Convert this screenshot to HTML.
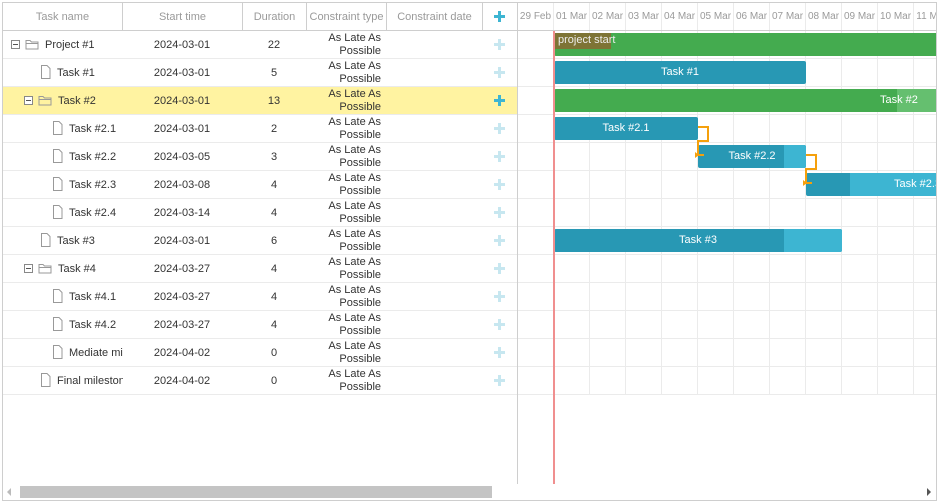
<!DOCTYPE html>
<html><head><style>
*{margin:0;padding:0;box-sizing:border-box}
body{width:938px;height:502px;background:#fff;font-family:"Liberation Sans",Arial,sans-serif;font-size:11px;color:#333;position:relative;overflow:hidden}
.a{position:absolute}
.hd{color:#9a9a9a;text-align:center;top:3px;height:28px;line-height:28px}
.row{position:absolute;left:3px;width:514px;height:28px;border-bottom:1px solid #ebebeb}
.c{position:absolute;top:1px;height:27px;line-height:27px;white-space:nowrap;overflow:hidden}
.ct{position:absolute;left:300px;width:78px;text-align:right;top:1px;line-height:12.5px}
.plus{position:absolute;left:491px;top:8px;width:11px;height:11px}
.plus:before{content:"";position:absolute;left:4px;top:0;width:3px;height:11px;background:#c7e7f0}
.plus:after{content:"";position:absolute;left:0;top:4px;width:11px;height:3px;background:#c7e7f0}
.plus.on:before,.plus.on:after{background:#3db5d2}
.tog{position:absolute;top:9px;width:9px;height:9px;border:1px solid #888;background:#fff}
.tog:after{content:"";position:absolute;left:1px;top:3px;width:5px;height:1px;background:#555}
.bar{position:absolute;height:23px;border-radius:2px;overflow:hidden}
.lb{position:absolute;color:#fff;height:23px;line-height:23px;white-space:nowrap}
.vl{position:absolute;width:1px;background:#ebebeb}
</style></head><body>
<div class="a" style="left:2px;top:2px;width:935px;height:499px;border:1px solid #cecece"></div>
<div class="a" style="left:3px;top:30px;width:933px;height:1px;background:#cecece"></div>
<div class="a hd" style="left:3px;width:119px">Task name</div>
<div class="a hd" style="left:122px;width:120px;border-left:1px solid #cecece">Start time</div>
<div class="a hd" style="left:242px;width:64px;border-left:1px solid #cecece">Duration</div>
<div class="a hd" style="left:306px;width:80px;border-left:1px solid #cecece">Constraint type</div>
<div class="a hd" style="left:386px;width:96px;border-left:1px solid #cecece">Constraint date</div>
<div class="a hd" style="left:482px;width:35px;border-left:1px solid #cecece"></div>
<div class="plus on" style="left:494px;top:11px"></div>
<div class="a" style="left:517px;top:3px;width:1px;height:481px;background:#cecece"></div>
<div class="a" id="scale" style="left:518px;top:3px;height:27px;width:418px;overflow:hidden;color:#9a9a9a;font-size:10px"></div>
<div class="a" id="rows" style="left:0;top:0"></div>
<div class="a" id="chart" style="left:518px;top:31px;width:418px;height:453px;overflow:hidden"></div>
<div class="a" style="left:20px;top:486px;width:472px;height:12px;background:#c4c4c4"></div>
<div class="a" style="left:7px;top:488px;width:0;height:0;border-top:4px solid transparent;border-bottom:4px solid transparent;border-right:4px solid #bbb"></div>
<div class="a" style="left:927px;top:488px;width:0;height:0;border-top:4px solid transparent;border-bottom:4px solid transparent;border-left:4px solid #555"></div>
<script>
var d=["29 Feb","01 Mar","02 Mar","03 Mar","04 Mar","05 Mar","06 Mar","07 Mar","08 Mar","09 Mar","10 Mar","11 Mar"],s="";
d.forEach(function(t,i){s+='<div class="a" style="left:'+(i*36)+'px;top:0;width:36px;height:27px;line-height:27px;text-align:center;border-right:1px solid #ebebeb;white-space:nowrap;overflow:hidden">'+t+'</div>'});
document.getElementById('scale').innerHTML=s;
var R=[["Project #1","2024-03-01","22",0,"f"],["Task #1","2024-03-01","5",1,"d"],["Task #2","2024-03-01","13",1,"f",1],["Task #2.1","2024-03-01","2",2,"d"],["Task #2.2","2024-03-05","3",2,"d"],["Task #2.3","2024-03-08","4",2,"d"],["Task #2.4","2024-03-14","4",2,"d"],["Task #3","2024-03-01","6",1,"d"],["Task #4","2024-03-27","4",1,"f"],["Task #4.1","2024-03-27","4",2,"d"],["Task #4.2","2024-03-27","4",2,"d"],["Mediate milestone","2024-04-02","0",2,"d"],["Final milestone","2024-04-02","0",1,"d"]];
var h="";
var fold='<svg width="15" height="12" viewBox="0 0 15 12"><path d="M1 2.5h4l1.5 1.5h6.5v7h-12z M1 5.5h12" fill="none" stroke="#999" stroke-width="1"/></svg>';
var doc='<svg width="11" height="14" viewBox="0 0 11 14"><path d="M1.5 0.5h5.5l3 3v10h-8.5z" fill="none" stroke="#999"/></svg>';
R.forEach(function(r,i){
 var top=31+28*i,l=r[3];var bg=r[5]?'background:#fff3a1;':'';
 h+='<div class="row" style="top:'+top+'px;'+bg+'">';
 var tx;
 if(r[4]=="f"){var tg=l==0?8:21;h+='<div class="tog" style="left:'+tg+'px"></div><div class="a" style="left:'+(tg+14)+'px;top:7px">'+fold+'</div>';tx=tg+34;}
 else{var ic=l==1?37:49;h+='<div class="a" style="left:'+ic+'px;top:6px">'+doc+'</div>';tx=ic+17;}
 h+='<div class="c" style="left:'+tx+'px;width:'+(120-tx)+'px">'+r[0]+'</div>';
 h+='<div class="c" style="left:119px;width:120px;text-align:center">'+r[1]+'</div>';
 h+='<div class="c" style="left:239px;width:64px;text-align:center">'+r[2]+'</div>';
 h+='<div class="ct">As Late As<br>Possible</div>';
 h+='<div class="plus'+(r[5]?' on':'')+'"></div></div>';
});
document.getElementById('rows').innerHTML=h;
var c="";
for(var i=0;i<13;i++)c+='<div class="a" style="left:0;top:'+(27+28*i)+'px;width:418px;height:1px;background:#ebebeb"></div>';
for(var i=1;i<12;i++)c+='<div class="vl" style="left:'+(i*36-1)+'px;top:0;height:364px"></div>';
function bar(x,w,row,col,txt,pw,pc,lx){var t=2+28*row;c+='<div class="bar" style="left:'+x+'px;top:'+t+'px;width:'+w+'px;background:'+col+'">'+(pw!=null?'<div class="a" style="left:'+pw+'px;top:0;width:'+(w-pw)+'px;height:23px;background:'+pc+'"></div>':'')+'</div>';
 if(txt){ if(lx==null) c+='<div class="lb" style="left:'+x+'px;top:'+t+'px;width:'+w+'px;text-align:center">'+txt+'</div>'; else c+='<div class="lb" style="left:'+lx+'px;top:'+t+'px">'+txt+'</div>';}}
bar(36,400,0,'#44ab4f','');
bar(36,252,1,'#2898b4','Task #1');
bar(36,400,2,'#44ab4f','Task #2',343,'#65bf6f',362);
bar(36,144,3,'#2898b4','Task #2.1');
bar(180,108,4,'#2898b4','Task #2.2',86,'#3db5d2');
bar(288,150,5,'#2898b4','Task #2.3',44,'#3db5d2',376);
bar(36,288,7,'#2898b4','Task #3',230,'#3db5d2');
c+='<div class="a" style="left:36px;top:2px;width:57px;height:16px;background:#7e7435;color:#eee;line-height:15px;padding-left:4px;white-space:nowrap">project start</div>';
c+='<svg class="a" style="left:0;top:0" width="418" height="200"><path d="M180 96h10v14h-10v14h6 M288 124h10v14h-10v14h6" fill="none" stroke="#f5a00c" stroke-width="2"/><path d="M177 121l4 3-4 3z M285 149l4 3-4 3z" fill="#f5a00c"/></svg>';
c+='<div class="a" style="left:35px;top:0;width:2px;height:453px;background:#f08f8f"></div>';
document.getElementById('chart').innerHTML=c;
</script>
</body></html>
